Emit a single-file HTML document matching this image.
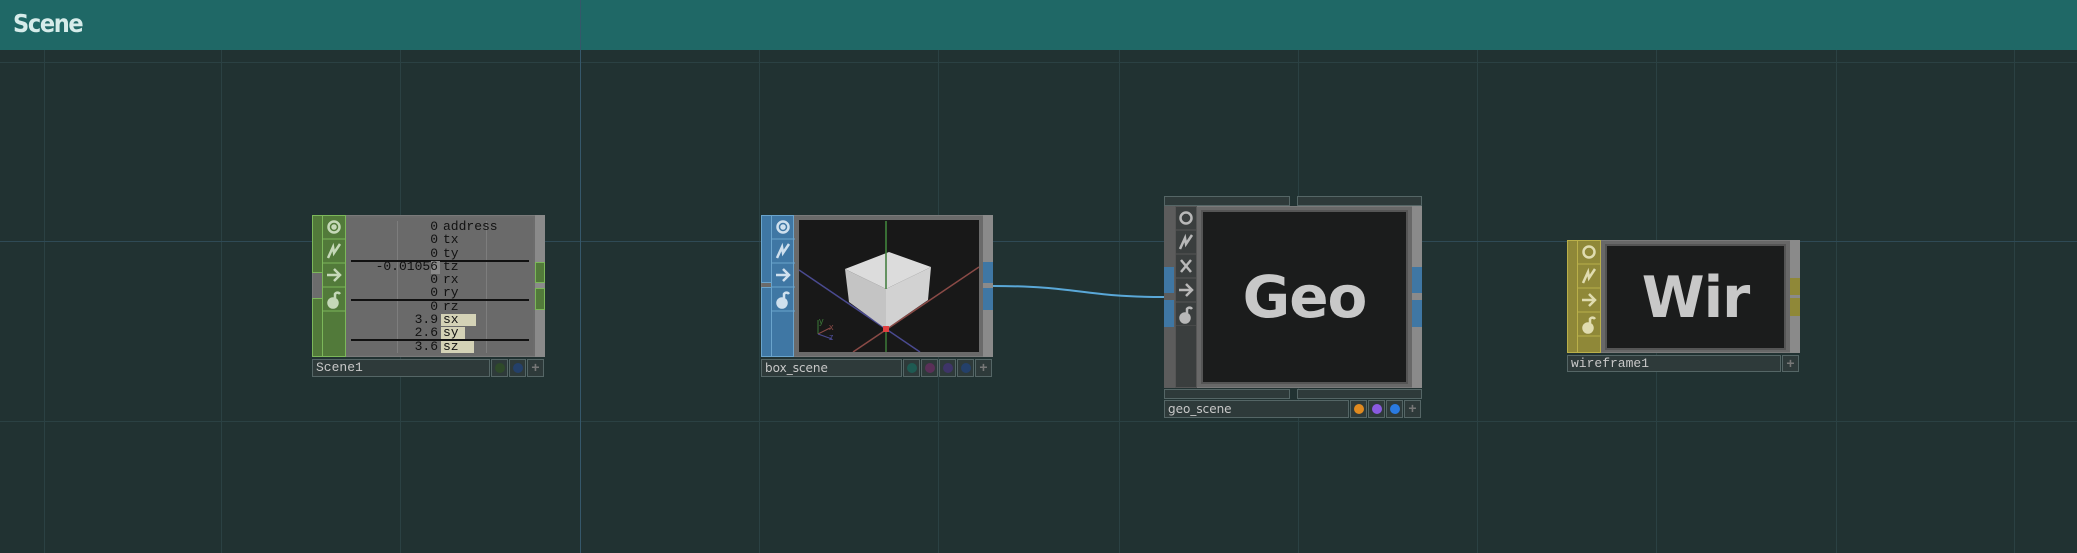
<!DOCTYPE html><html><head><meta charset="utf-8"><style>
*{margin:0;padding:0;box-sizing:border-box}
body{width:2077px;height:553px;background:#213232;position:relative;overflow:hidden;font-family:"Liberation Mono",monospace}
.a{position:absolute}
.vl{position:absolute;top:0;width:1px;height:553px;background:#2b4143}
.hl{position:absolute;left:0;height:1px;width:2077px;background:#2b4143}
.name{position:absolute;background:#2e3a3a;border:1px solid #566;color:#c8c8c8;font-size:13px;line-height:16px;padding-left:3px}
.cb{position:absolute;width:17px;height:17px;background:#2e3a3a;border:1px solid #566}
.dot{position:absolute;left:3px;top:3px;width:10px;height:10px;border-radius:50%}
</style></head><body>
<div class="vl" style="left:44px"></div><div class="vl" style="left:221px"></div><div class="vl" style="left:400px"></div><div class="vl" style="left:759px"></div><div class="vl" style="left:938px"></div><div class="vl" style="left:1119px"></div><div class="vl" style="left:1298px"></div><div class="vl" style="left:1477px"></div><div class="vl" style="left:1656px"></div><div class="vl" style="left:1836px"></div><div class="vl" style="left:2014px"></div>
<div class="hl" style="top:62px"></div><div class="hl" style="top:241px;background:#2f4a55"></div><div class="hl" style="top:421px"></div>
<div class="a" style="left:0;top:0;width:2077px;height:50px;background:#1f6866"></div>
<div class="vl" style="left:580px;background:#35576a"></div>
<div class="a" style="left:13px;top:9px;font:bold 25px 'DejaVu Sans',sans-serif;color:#d6ecea;letter-spacing:-1.5px;transform:scaleX(0.9);transform-origin:left">Scene</div>

<!-- Scene1 -->
<div class="a" style="left:312px;top:215px;width:233px;height:142px;background:#6c6c6c;border:1px solid #7a7a7a"></div>
<div class="a" style="left:312px;top:215px;width:11px;height:58px;background:#527a3a;border:1px solid #7cb75a"></div>
<div class="a" style="left:312px;top:298px;width:11px;height:59px;background:#527a3a;border:1px solid #7cb75a"></div>
<div class="a" style="left:322px;top:215px;width:24px;height:142px;background:#527a3a;border:1px solid #7cb75a"></div>
<div class="a" style="left:346px;top:218px;width:187px;height:137px;background:#6a6a6a"></div>
<div class="a" style="left:397px;top:221px;width:1px;height:132px;background:#7d7d7d"></div>
<div class="a" style="left:486px;top:221px;width:1px;height:132px;background:#7d7d7d"></div>
<div class="a" style="left:535px;top:215px;width:10px;height:142px;background:#8a8a8a"></div>
<div class="a" style="left:535px;top:262px;width:10px;height:21px;background:#527a3a;border:1px solid #7cb75a"></div>
<div class="a" style="left:535px;top:288px;width:10px;height:22px;background:#527a3a;border:1px solid #7cb75a"></div>
<div class="a" style="left:351px;top:260px;width:178px;height:2px;background:#111"></div>
<div class="a" style="left:351px;top:299px;width:178px;height:2px;background:#111"></div>
<div class="a" style="left:351px;top:339px;width:178px;height:2px;background:#111"></div>
<div class="a" style="left:441px;top:314px;width:35px;height:12px;background:#d4d2b6"></div>
<div class="a" style="left:441px;top:327px;width:24px;height:12px;background:#d4d2b6"></div>
<div class="a" style="left:441px;top:341px;width:33px;height:12px;background:#d4d2b6"></div>
<div class="a" style="left:431px;top:261px;width:9px;height:13px;background:#8a8a8a"></div>
<div class="a" style="left:346px;top:220px;width:92px;font-size:13px;line-height:13.3px;color:#111;text-align:right">0<br>0<br>0<br>-0.01056<br>0<br>0<br>0<br>3.9<br>2.6<br>3.6</div>
<div class="a" style="left:443px;top:220px;font-size:13px;line-height:13.3px;color:#111">address<br>tx<br>ty<br>tz<br>rx<br>ry<br>rz<br>sx<br>sy<br>sz</div>
<div class="name" style="left:312px;top:359px;width:178px;height:18px">Scene1</div>
<div class="cb" style="left:491px;top:359px;height:18px"><div class="dot" style="background:#2f4a2a"></div></div>
<div class="cb" style="left:509px;top:359px;height:18px"><div class="dot" style="background:#24406a"></div></div>
<div class="cb" style="left:527px;top:359px;height:18px;color:#777;font:bold 14px sans-serif;text-align:center;line-height:15px">+</div>

<!-- box_scene -->
<div class="a" style="left:761px;top:215px;width:232px;height:142px;background:#6a6a6a;border:1px solid #7a7a7a"></div>
<div class="a" style="left:761px;top:215px;width:11px;height:68px;background:#3f77a4;border:1px solid #6aa4cc"></div>
<div class="a" style="left:761px;top:287px;width:11px;height:70px;background:#3f77a4;border:1px solid #6aa4cc"></div>
<div class="a" style="left:771px;top:215px;width:23px;height:142px;background:#3f77a4;border:1px solid #6aa4cc"></div>
<div class="a" style="left:983px;top:215px;width:10px;height:142px;background:#8a8a8a"></div>
<div class="a" style="left:983px;top:262px;width:10px;height:21px;background:#3f77a4"></div>
<div class="a" style="left:983px;top:288px;width:10px;height:22px;background:#3f77a4"></div>
<svg class="a" style="left:799px;top:220px" width="180" height="132" viewBox="799 220 180 132">
<rect x="799" y="220" width="180" height="132" fill="#181818"/>
<line x1="799" y1="270" x2="920" y2="352" stroke="#4a4a90" stroke-width="1.5"/>
<line x1="853" y1="352" x2="979" y2="267" stroke="#8a4a46" stroke-width="1.5"/>
<line x1="886" y1="221" x2="886" y2="352" stroke="#3c7a38" stroke-width="1.5"/>
<polygon points="845,269 889,252 931,267 886,289" fill="#dcdcdc"/>
<polygon points="845,269 886,289 886,329 849,302" fill="#c4c4c4"/>
<polygon points="886,289 931,267 928,300 886,329" fill="#d2d2d2"/>
<line x1="886" y1="221" x2="886" y2="289" stroke="#3c7a38" stroke-width="1.5"/>
<rect x="883" y="326" width="6" height="6" fill="#e04040"/>
<line x1="818" y1="334" x2="818" y2="320" stroke="#3c7a38"/><line x1="818" y1="334" x2="830" y2="328" stroke="#8a4a46"/><line x1="818" y1="334" x2="832" y2="339" stroke="#4a4a90"/>
<text x="819" y="324" font-size="9" fill="#3c7a38" font-family="Liberation Sans">y</text><text x="829" y="330" font-size="9" fill="#8a4a46" font-family="Liberation Sans">x</text><text x="829" y="340" font-size="9" fill="#4a4a90" font-family="Liberation Sans">z</text>
</svg>
<div class="name" style="left:761px;top:359px;width:141px;height:18px;font-family:'DejaVu Sans',sans-serif;font-size:12px">box_scene</div>
<div class="cb" style="left:903px;top:359px;height:18px"><div class="dot" style="background:#1e5a52"></div></div>
<div class="cb" style="left:921px;top:359px;height:18px"><div class="dot" style="background:#5a3058"></div></div>
<div class="cb" style="left:939px;top:359px;height:18px"><div class="dot" style="background:#3e3468"></div></div>
<div class="cb" style="left:957px;top:359px;height:18px"><div class="dot" style="background:#24406a"></div></div>
<div class="cb" style="left:975px;top:359px;height:18px;color:#777;font:bold 14px sans-serif;text-align:center;line-height:15px">+</div>

<svg class="a" style="left:0;top:0" width="2077" height="553"><path d="M993 286 C1080 286,1080 297,1165 297" stroke="#5aa8d8" stroke-width="2" fill="none"/></svg>

<!-- geo_scene -->
<div class="a" style="left:1164px;top:196px;width:126px;height:10px;background:#2e3a3a;border:1px solid #566"></div>
<div class="a" style="left:1297px;top:196px;width:125px;height:10px;background:#2e3a3a;border:1px solid #566"></div>
<div class="a" style="left:1164px;top:206px;width:258px;height:182px;background:#686868;border:1px solid #7a7a7a"></div>
<div class="a" style="left:1164px;top:206px;width:11px;height:182px;background:#5c5c5c"></div>
<div class="a" style="left:1164px;top:267px;width:10px;height:26px;background:#3f77a4"></div>
<div class="a" style="left:1164px;top:300px;width:10px;height:27px;background:#3f77a4"></div>
<div class="a" style="left:1175px;top:206px;width:22px;height:182px;background:#3a3e3e;border:1px solid #555"></div>
<div class="a" style="left:1412px;top:206px;width:10px;height:182px;background:#8a8a8a"></div>
<div class="a" style="left:1412px;top:267px;width:10px;height:26px;background:#3f77a4"></div>
<div class="a" style="left:1412px;top:300px;width:10px;height:27px;background:#3f77a4"></div>
<div class="a" style="left:1201px;top:210px;width:207px;height:174px;background:#1b1c1c;border:2px solid #555;color:#c8c8c8;font:bold 58px 'DejaVu Sans',sans-serif;text-align:center;line-height:170px;letter-spacing:-1px">Geo</div>
<div class="a" style="left:1164px;top:389px;width:126px;height:10px;background:#2e3a3a;border:1px solid #566"></div>
<div class="a" style="left:1297px;top:389px;width:125px;height:10px;background:#2e3a3a;border:1px solid #566"></div>
<div class="name" style="left:1164px;top:400px;width:185px;height:18px;font-family:'DejaVu Sans',sans-serif;font-size:12px">geo_scene</div>
<div class="cb" style="left:1350px;top:400px;height:18px"><div class="dot" style="background:#e08a20"></div></div>
<div class="cb" style="left:1368px;top:400px;height:18px"><div class="dot" style="background:#8a5ae0"></div></div>
<div class="cb" style="left:1386px;top:400px;height:18px"><div class="dot" style="background:#2a7ae0"></div></div>
<div class="cb" style="left:1404px;top:400px;height:18px;color:#777;font:bold 14px sans-serif;text-align:center;line-height:15px">+</div>

<!-- wireframe1 -->
<div class="a" style="left:1567px;top:240px;width:233px;height:113px;background:#686868;border:1px solid #7a7a7a"></div>
<div class="a" style="left:1567px;top:240px;width:11px;height:113px;background:#8f8838;border:1px solid #bab04a"></div>
<div class="a" style="left:1577px;top:240px;width:24px;height:113px;background:#8f8838;border:1px solid #bab04a"></div>
<div class="a" style="left:1790px;top:240px;width:10px;height:113px;background:#8a8a8a"></div>
<div class="a" style="left:1790px;top:278px;width:10px;height:17px;background:#8f8838"></div>
<div class="a" style="left:1790px;top:298px;width:10px;height:18px;background:#8f8838"></div>
<div class="a" style="left:1605px;top:244px;width:181px;height:106px;background:#1b1c1c;border:2px solid #555;color:#c8c8c8;font:bold 57px 'DejaVu Sans',sans-serif;text-align:center;line-height:104px;letter-spacing:-1px">Wir</div>
<div class="name" style="left:1567px;top:355px;width:214px;height:17px">wireframe1</div>
<div class="cb" style="left:1782px;top:355px;color:#777;font:bold 14px sans-serif;text-align:center;line-height:14px">+</div>

<!-- icon columns -->
<svg class="a" style="left:322px;top:215px" width="24" height="100"><g fill="none" stroke="#c5d8b8" stroke-width="2.5"><line x1="0" y1="24" x2="24" y2="24" stroke="#7cb75a" stroke-width="1"/><line x1="0" y1="48" x2="24" y2="48" stroke="#7cb75a" stroke-width="1"/><line x1="0" y1="72" x2="24" y2="72" stroke="#7cb75a" stroke-width="1"/><line x1="0" y1="96" x2="24" y2="96" stroke="#7cb75a" stroke-width="1"/><circle cx="12" cy="12" r="5.5"/><circle cx="12" cy="12" r="1.5" fill="#c5d8b8"/><path d="M6 43 L11 32 L12 38 L18 29" /><path d="M5 60 H17 M12 54 L18 60 L12 66"/><circle cx="11" cy="88" r="4.5" fill="#c5d8b8"/><path d="M13 83 V79 A3 3 0 0 1 18 79"/></g></svg>
<svg class="a" style="left:771px;top:215px" width="24" height="100"><g fill="none" stroke="#cfe0ee" stroke-width="2.5"><line x1="0" y1="24" x2="24" y2="24" stroke="#6aa4cc" stroke-width="1"/><line x1="0" y1="48" x2="24" y2="48" stroke="#6aa4cc" stroke-width="1"/><line x1="0" y1="72" x2="24" y2="72" stroke="#6aa4cc" stroke-width="1"/><line x1="0" y1="96" x2="24" y2="96" stroke="#6aa4cc" stroke-width="1"/><circle cx="12" cy="12" r="5.5"/><circle cx="12" cy="12" r="1.5" fill="#cfe0ee"/><path d="M6 43 L11 32 L12 38 L18 29" /><path d="M5 60 H17 M12 54 L18 60 L12 66"/><circle cx="11" cy="88" r="4.5" fill="#cfe0ee"/><path d="M13 83 V79 A3 3 0 0 1 18 79"/></g></svg>
<svg class="a" style="left:1175px;top:206px" width="22" height="120"><g fill="none" stroke="#b8b8b8" stroke-width="2.5"><line x1="0" y1="24" x2="22" y2="24" stroke="#555" stroke-width="1"/><line x1="0" y1="48" x2="22" y2="48" stroke="#555" stroke-width="1"/><line x1="0" y1="72" x2="22" y2="72" stroke="#555" stroke-width="1"/><line x1="0" y1="96" x2="22" y2="96" stroke="#555" stroke-width="1"/><line x1="0" y1="120" x2="22" y2="120" stroke="#555" stroke-width="1"/><circle cx="11" cy="12" r="5.5"/><path d="M5 43 L10 32 L11 38 L17 29" /><path d="M6 54 L16 66 M16 54 L6 66"/><path d="M4 84 H16 M11 78 L17 84 L11 90"/><circle cx="10" cy="112" r="4.5" fill="#b8b8b8"/><path d="M12 107 V103 A3 3 0 0 1 17 103"/></g></svg>
<svg class="a" style="left:1577px;top:240px" width="24" height="100"><g fill="none" stroke="#e0dcb0" stroke-width="2.5"><line x1="0" y1="24" x2="24" y2="24" stroke="#bab04a" stroke-width="1"/><line x1="0" y1="48" x2="24" y2="48" stroke="#bab04a" stroke-width="1"/><line x1="0" y1="72" x2="24" y2="72" stroke="#bab04a" stroke-width="1"/><line x1="0" y1="96" x2="24" y2="96" stroke="#bab04a" stroke-width="1"/><circle cx="12" cy="12" r="5.5"/><path d="M6 43 L11 32 L12 38 L18 29" /><path d="M5 60 H17 M12 54 L18 60 L12 66"/><circle cx="11" cy="88" r="4.5" fill="#e0dcb0"/><path d="M13 83 V79 A3 3 0 0 1 18 79"/></g></svg>
</body></html>
